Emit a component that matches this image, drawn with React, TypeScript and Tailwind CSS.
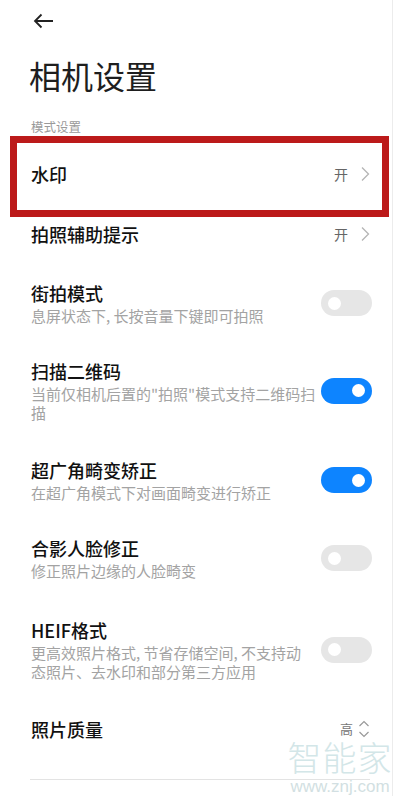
import React from "react";

const font = { fontFamily: '"Noto Sans CJK SC", "Noto Sans", sans-serif' };

function Toggle({ on }: { on: boolean }) {
  return (
    <div
      className={`relative h-[26px] w-[51px] shrink-0 rounded-full ${on ? "bg-[#0d84ff]" : "bg-[#e6e6e6]"}`}
    >
      <div
        className={`absolute top-[6.5px] h-[13px] w-[13px] rounded-full bg-white ${on ? "left-[31px]" : "left-[7px]"}`}
      />
    </div>
  );
}

function Chevron() {
  return (
    <svg width="9" height="16" viewBox="0 0 9 16" className="ml-[13px]">
      <path d="M1 1.5 L7.5 8 L1 14.5" fill="none" stroke="#b5b5b5" strokeWidth="1.3" />
    </svg>
  );
}

function ValueRow({ title, value }: { title: string; value: string }) {
  return (
    <div className="flex items-center py-[18px] pl-[31px] pr-[30px]">
      <div className="flex-1 text-[18px] leading-[24px] font-medium text-[#111]">{title}</div>
      <div className="flex items-center">
        <span className="text-[14px] text-[#666]">{value}</span>
        <Chevron />
      </div>
    </div>
  );
}

function ToggleRow({
  title,
  sub,
  on,
  mt = 0,
  narrow = false,
}: {
  title: string;
  sub: string;
  on: boolean;
  mt?: number;
  narrow?: boolean;
}) {
  return (
    <div className="flex items-center justify-between py-[18px] pl-[31px] pr-[28px]" style={{ marginTop: mt }}>
      <div className={narrow ? "w-[280px]" : "w-[290px]"}>
        <div className="text-[18px] leading-[24px] font-medium text-[#111]">{title}</div>
        <div className="mt-[1px] text-[15px] leading-[19px] text-[#a3a3a3]">{sub}</div>
      </div>
      <Toggle on={on} />
    </div>
  );
}

export default function App() {
  return (
    <div className="relative h-[796px] w-[400px] overflow-hidden bg-white" style={font}>
      {/* right edge line */}
      <div className="absolute left-[392px] top-0 h-full w-px bg-[#ececec]" />

      {/* header */}
      <div className="flex h-[42px] items-center pl-[33px]">
        <svg width="21" height="16" viewBox="0 0 21 16">
          <path d="M20 8 H2 M8.5 1.5 L2 8 L8.5 14.5" fill="none" stroke="#222" strokeWidth="1.8" />
        </svg>
      </div>
      <div className="mt-[13px] pl-[29px] text-[32px] leading-[40px] font-normal text-[#1e1e1e]">相机设置</div>
      <div className="mt-[24px] pl-[31px] text-[12.5px] leading-[16px] text-[#9a9a9a]">模式设置</div>

      <div className="relative mt-[9px]">
        <ValueRow title="水印" value="开" />
        <div className="pointer-events-none absolute left-[10px] top-[-8px] h-[81px] w-[379px] border-[7px] border-[#bc1a1a]" />
      </div>
      <ValueRow title="拍照辅助提示" value="开" />

      <ToggleRow title="街拍模式" sub="息屏状态下, 长按音量下键即可拍照" on={false} mt={-1} />
      <ToggleRow title="扫描二维码" sub={'当前仅相机后置的"拍照"模式支持二维码扫描'} on={true} mt={-2} />
      <ToggleRow title="超广角畸变矫正" sub="在超广角模式下对画面畸变进行矫正" on={true} mt={0} />
      <ToggleRow title="合影人脸修正" sub="修正照片边缘的人脸畸变" on={false} mt={-2} />
      <ToggleRow
        title="HEIF格式"
        sub="更高效照片格式, 节省存储空间, 不支持动态照片、去水印和部分第三方应用"
        on={false}
        mt={2}
        narrow
      />

      <div className="flex items-center py-[18px] pl-[31px] pr-[30px]">
        <div className="flex-1 text-[18px] leading-[24px] font-medium text-[#111]">照片质量</div>
        <div className="flex items-center">
          <span className="text-[13px] text-[#777]">高</span>
          <svg width="12" height="20" viewBox="0 0 12 20" className="ml-[5px]">
            <path d="M1.5 7 L6 2.5 L10.5 7 M1.5 13 L6 17.5 L10.5 13" fill="none" stroke="#999" strokeWidth="1.2" />
          </svg>
        </div>
      </div>

      <div className="mx-[30px] mt-[20px] h-px bg-[#e3e3e3]" />

      {/* watermark */}
      <div className="pointer-events-none absolute left-[284px] top-[737px] flex w-[112px] flex-col items-center">
        <div className="whitespace-nowrap text-[34px] leading-[40px] font-light tracking-[1px] text-[#d3e6e8]">智能家</div>
        <div
          className="whitespace-nowrap text-[17px] leading-[19px] text-[#d2dfe2]"
          style={{ fontFamily: '"Liberation Sans", sans-serif' }}
        >
          www.znj.com
        </div>
      </div>
    </div>
  );
}
